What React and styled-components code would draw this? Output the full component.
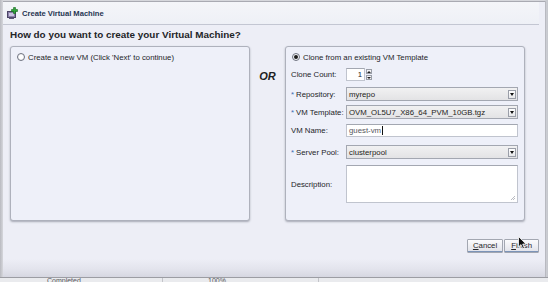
import React from 'react';
import styled, { createGlobalStyle } from 'styled-components';

const GlobalStyle = createGlobalStyle`
  html, body {
    margin: 0;
    padding: 0;
    background: #cdced3;
  }
  body {
    width: 548px;
    height: 282px;
    overflow: hidden;
    font-family: 'Liberation Sans', Arial, sans-serif;
  }
`;

const Screen = styled.div`
  width: 548px;
  height: 282px;
  overflow: hidden;
  position: relative;
  background: linear-gradient(90deg, #b9bac0 0px, #d6d7dc 3px, #d6d7dc 544px, #c4c6cc 548px);
`;

const Dialog = styled.div`
  margin: 1px 0 0 3px;
  width: 542px;
  height: 275px;
  display: flex;
  flex-direction: column;
  background: #edeef6;
  border-top: 1px solid #a9aab2;
  box-shadow: 1px 0 0 #b8b9c0;
`;

const TitleBar = styled.div`
  height: 22px;
  display: flex;
  align-items: center;
  gap: 4px;
  padding-left: 4px;
  margin-right: 6px;
  border-bottom: 1px solid #c3c6d2;
  background: linear-gradient(#f4f5f9, #eef0f6);
`;

const Title = styled.span`
  font-size: 7.6px;
  font-weight: bold;
  color: #1f3552;
`;

const Heading = styled.h1`
  margin: 4px 0 0 7px;
  font-size: 9.9px;
  font-weight: bold;
  color: #232428;
  line-height: 12px;
`;

const Columns = styled.div`
  display: flex;
  margin: 5px 0 0 7px;
  height: 175px;
`;

const Panel = styled.div`
  width: 240px;
  height: 175px;
  box-sizing: border-box;
  background: #eef0f9;
  border: 1px solid #aeb1bc;
  border-radius: 3px;
  box-shadow: 0 1px 2px rgba(80, 84, 100, 0.45);
  padding: 5px 6px;
  font-size: 7.8px;
  color: #232428;
`;

const OrColumn = styled.div`
  width: 35px;
  display: flex;
  justify-content: center;
  padding-top: 24px;
  font-size: 11px;
  font-weight: bold;
  font-style: italic;
  color: #1d1e22;
`;

const RadioRow = styled.label`
  display: flex;
  align-items: center;
  gap: 3px;
  height: 10px;
`;

const Radio = styled.span`
  width: 8px;
  height: 8px;
  box-sizing: border-box;
  border-radius: 50%;
  border: 1px solid #6f7380;
  background: radial-gradient(circle, #fff 40%, #e4e6ee 100%);
  display: flex;
  align-items: center;
  justify-content: center;
  flex-shrink: 0;

  &::after {
    content: '';
    width: 4px;
    height: 4px;
    border-radius: 50%;
    background: ${({ checked }) => (checked ? '#1a1a1a' : 'transparent')};
  }
`;

const Field = styled.div`
  display: flex;
  align-items: center;
  margin-top: ${({ mt }) => mt}px;
  margin-left: -1px;
`;

const Label = styled.span`
  width: 55px;
  flex-shrink: 0;
  white-space: nowrap;
`;

const Req = styled.span`
  color: #3b6fb0;
  margin-right: 2px;
`;

const Select = styled.div`
  width: 178px;
  height: 14px;
  box-sizing: border-box;
  border: 1px solid #a3a7b1;
  background: linear-gradient(#f1f1f2, #e3e3e5);
  display: flex;
  align-items: center;
  justify-content: space-between;
  padding-left: 2px;
  color: #1d1d20;
  white-space: nowrap;
`;

const SelectButton = styled.span`
  width: 8px;
  height: 9px;
  margin-right: 1px;
  box-sizing: border-box;
  border: 1px solid #9a9ea8;
  background: linear-gradient(#ffffff, #e6e7ea);
  display: flex;
  align-items: center;
  justify-content: center;
`;

const TextInput = styled.div`
  width: 178px;
  height: ${({ h }) => h || 13}px;
  box-sizing: border-box;
  border: 1px solid #c0c4ce;
  border-top-color: #a3a7b1;
  background: #ffffff;
  padding-left: 2px;
  display: flex;
  align-items: center;
  position: relative;
  color: #55575d;
`;

const Caret = styled.span`
  width: 1px;
  height: 9px;
  background: #111;
  margin-left: 0.5px;
`;

const Grip = styled.svg`
  position: absolute;
  right: 1px;
  bottom: 1px;
`;

const Spinner = styled.div`
  display: flex;
  align-items: center;
  gap: 1px;
`;

const SpinBox = styled.div`
  width: 19px;
  height: 13px;
  box-sizing: border-box;
  border: 1px solid #c0c4ce;
  border-top-color: #a3a7b1;
  background: #fff;
  text-align: right;
  padding-right: 2px;
  line-height: 11px;
`;

const SpinArrows = styled.div`
  display: flex;
  flex-direction: column;
  gap: 1px;
`;

const SpinArrow = styled.span`
  width: 6px;
  height: 5px;
  box-sizing: border-box;
  border: 1px solid #9a9ea8;
  background: #f3f3f5;
  display: flex;
  align-items: center;
  justify-content: center;
`;

const Footer = styled.div`
  display: flex;
  justify-content: flex-end;
  margin: 18px 6px 0 0;
`;

const Button = styled.button`
  height: 14px;
  padding: 0 ${({ px }) => px}px;
  box-sizing: border-box;
  border: 1px solid #a3a7b1;
  border-radius: 1px;
  background: linear-gradient(#fbfbfd, #e1e2e9);
  font-family: inherit;
  font-size: 7.8px;
  color: #25262b;
  margin-left: 1px;
  line-height: 12px;
  box-shadow: inset 0 -1px 0 #7c94b8;

  u {
    text-decoration: underline;
  }
`;

const BottomBand = styled.div`
  margin-top: auto;
  height: 18px;
  background: linear-gradient(#edeef6, #e2e3ec 60%, #d6d7e1);
`;

const Behind = styled.div`
  height: 6px;
  display: flex;
  align-items: flex-start;
  font-size: 7px;
  color: #55575d;
  background: #eaebee;
  border-top: 1px solid #9c9da3;
  line-height: 6px;
`;

const BehindCell = styled.span`
  width: ${({ w }) => w}px;
  padding-left: ${({ pl }) => pl}px;
  border-right: 1px solid #c3c4c9;
  height: 6px;
  overflow: hidden;
`;

const Cursor = styled.svg`
  position: absolute;
  left: 518px;
  top: 236px;
`;

const DownArrow = () => (
  <svg width="4" height="3" viewBox="0 0 4 3">
    <path d="M0 0 H4 L2 3 Z" fill="#111" />
  </svg>
);

const VmIcon = () => (
  <svg width="11" height="12" viewBox="0 0 11 12">
    <rect x="0.5" y="4.5" width="8" height="6" fill="#8a7fa8" stroke="#4b4466" />
    <rect x="2" y="6" width="5" height="3" fill="#c9c2e0" />
    <rect x="2" y="10.5" width="5" height="1.5" fill="#5c5576" />
    <path d="M6.5 0.5 h2 v2 h2 v2 h-2 v2 h-2 v-2 h-2 v-2 h2 z" fill="#2fa83a" stroke="#14661c" strokeWidth="0.6" />
  </svg>
);

const Dropdown = ({ value }) => (
  <Select>
    <span>{value}</span>
    <SelectButton>
      <DownArrow />
    </SelectButton>
  </Select>
);

export default function App() {
  return (
    <>
      <GlobalStyle />
      <Screen>
        <Dialog>
          <TitleBar>
            <VmIcon />
            <Title>Create Virtual Machine</Title>
          </TitleBar>
          <Heading>How do you want to create your Virtual Machine?</Heading>
          <Columns>
            <Panel>
              <RadioRow>
                <Radio />
                Create a new VM (Click 'Next' to continue)
              </RadioRow>
            </Panel>
            <OrColumn>OR</OrColumn>
            <Panel>
              <RadioRow>
                <Radio checked />
                Clone from an existing VM Template
              </RadioRow>
              <Field mt={6}>
                <Label>Clone Count:</Label>
                <Spinner>
                  <SpinBox>1</SpinBox>
                  <SpinArrows>
                    <SpinArrow>
                      <svg width="4" height="2" viewBox="0 0 4 2"><path d="M0 2 H4 L2 0 Z" fill="#222" /></svg>
                    </SpinArrow>
                    <SpinArrow>
                      <svg width="4" height="2" viewBox="0 0 4 2"><path d="M0 0 H4 L2 2 Z" fill="#222" /></svg>
                    </SpinArrow>
                  </SpinArrows>
                </Spinner>
              </Field>
              <Field mt={6}>
                <Label><Req>*</Req>Repository:</Label>
                <Dropdown value="myrepo" />
              </Field>
              <Field mt={4}>
                <Label><Req>*</Req>VM Template:</Label>
                <Dropdown value="OVM_OL5U7_X86_64_PVM_10GB.tgz" />
              </Field>
              <Field mt={5}>
                <Label>VM Name:</Label>
                <TextInput>
                  guest-vm
                  <Caret />
                </TextInput>
              </Field>
              <Field mt={8}>
                <Label><Req>*</Req>Server Pool:</Label>
                <Dropdown value="clusterpool" />
              </Field>
              <Field mt={6}>
                <Label>Description:</Label>
                <TextInput h={38}>
                  <Grip width="6" height="6" viewBox="0 0 6 6">
                    <path d="M5 1 L1 5 M5 3 L3 5" stroke="#a8abb4" strokeWidth="0.8" />
                  </Grip>
                </TextInput>
              </Field>
            </Panel>
          </Columns>
          <Footer>
            <Button px={5}><u>C</u>ancel</Button>
            <Button px={6}><u>F</u>inish</Button>
          </Footer>
          <BottomBand />
        </Dialog>
        <Behind>
          <BehindCell w={115} pl={47}>Completed</BehindCell>
          <BehindCell w={110} pl={45}>100%</BehindCell>
        </Behind>
        <Cursor width="9" height="14" viewBox="0 0 9 14">
          <path d="M0.5 0.5 L0.5 11 L3 8.6 L4.8 12.8 L6.4 12.1 L4.7 8.1 L8 8.1 Z" fill="#111" stroke="#fff" strokeWidth="0.8" />
        </Cursor>
      </Screen>
    </>
  );
}
